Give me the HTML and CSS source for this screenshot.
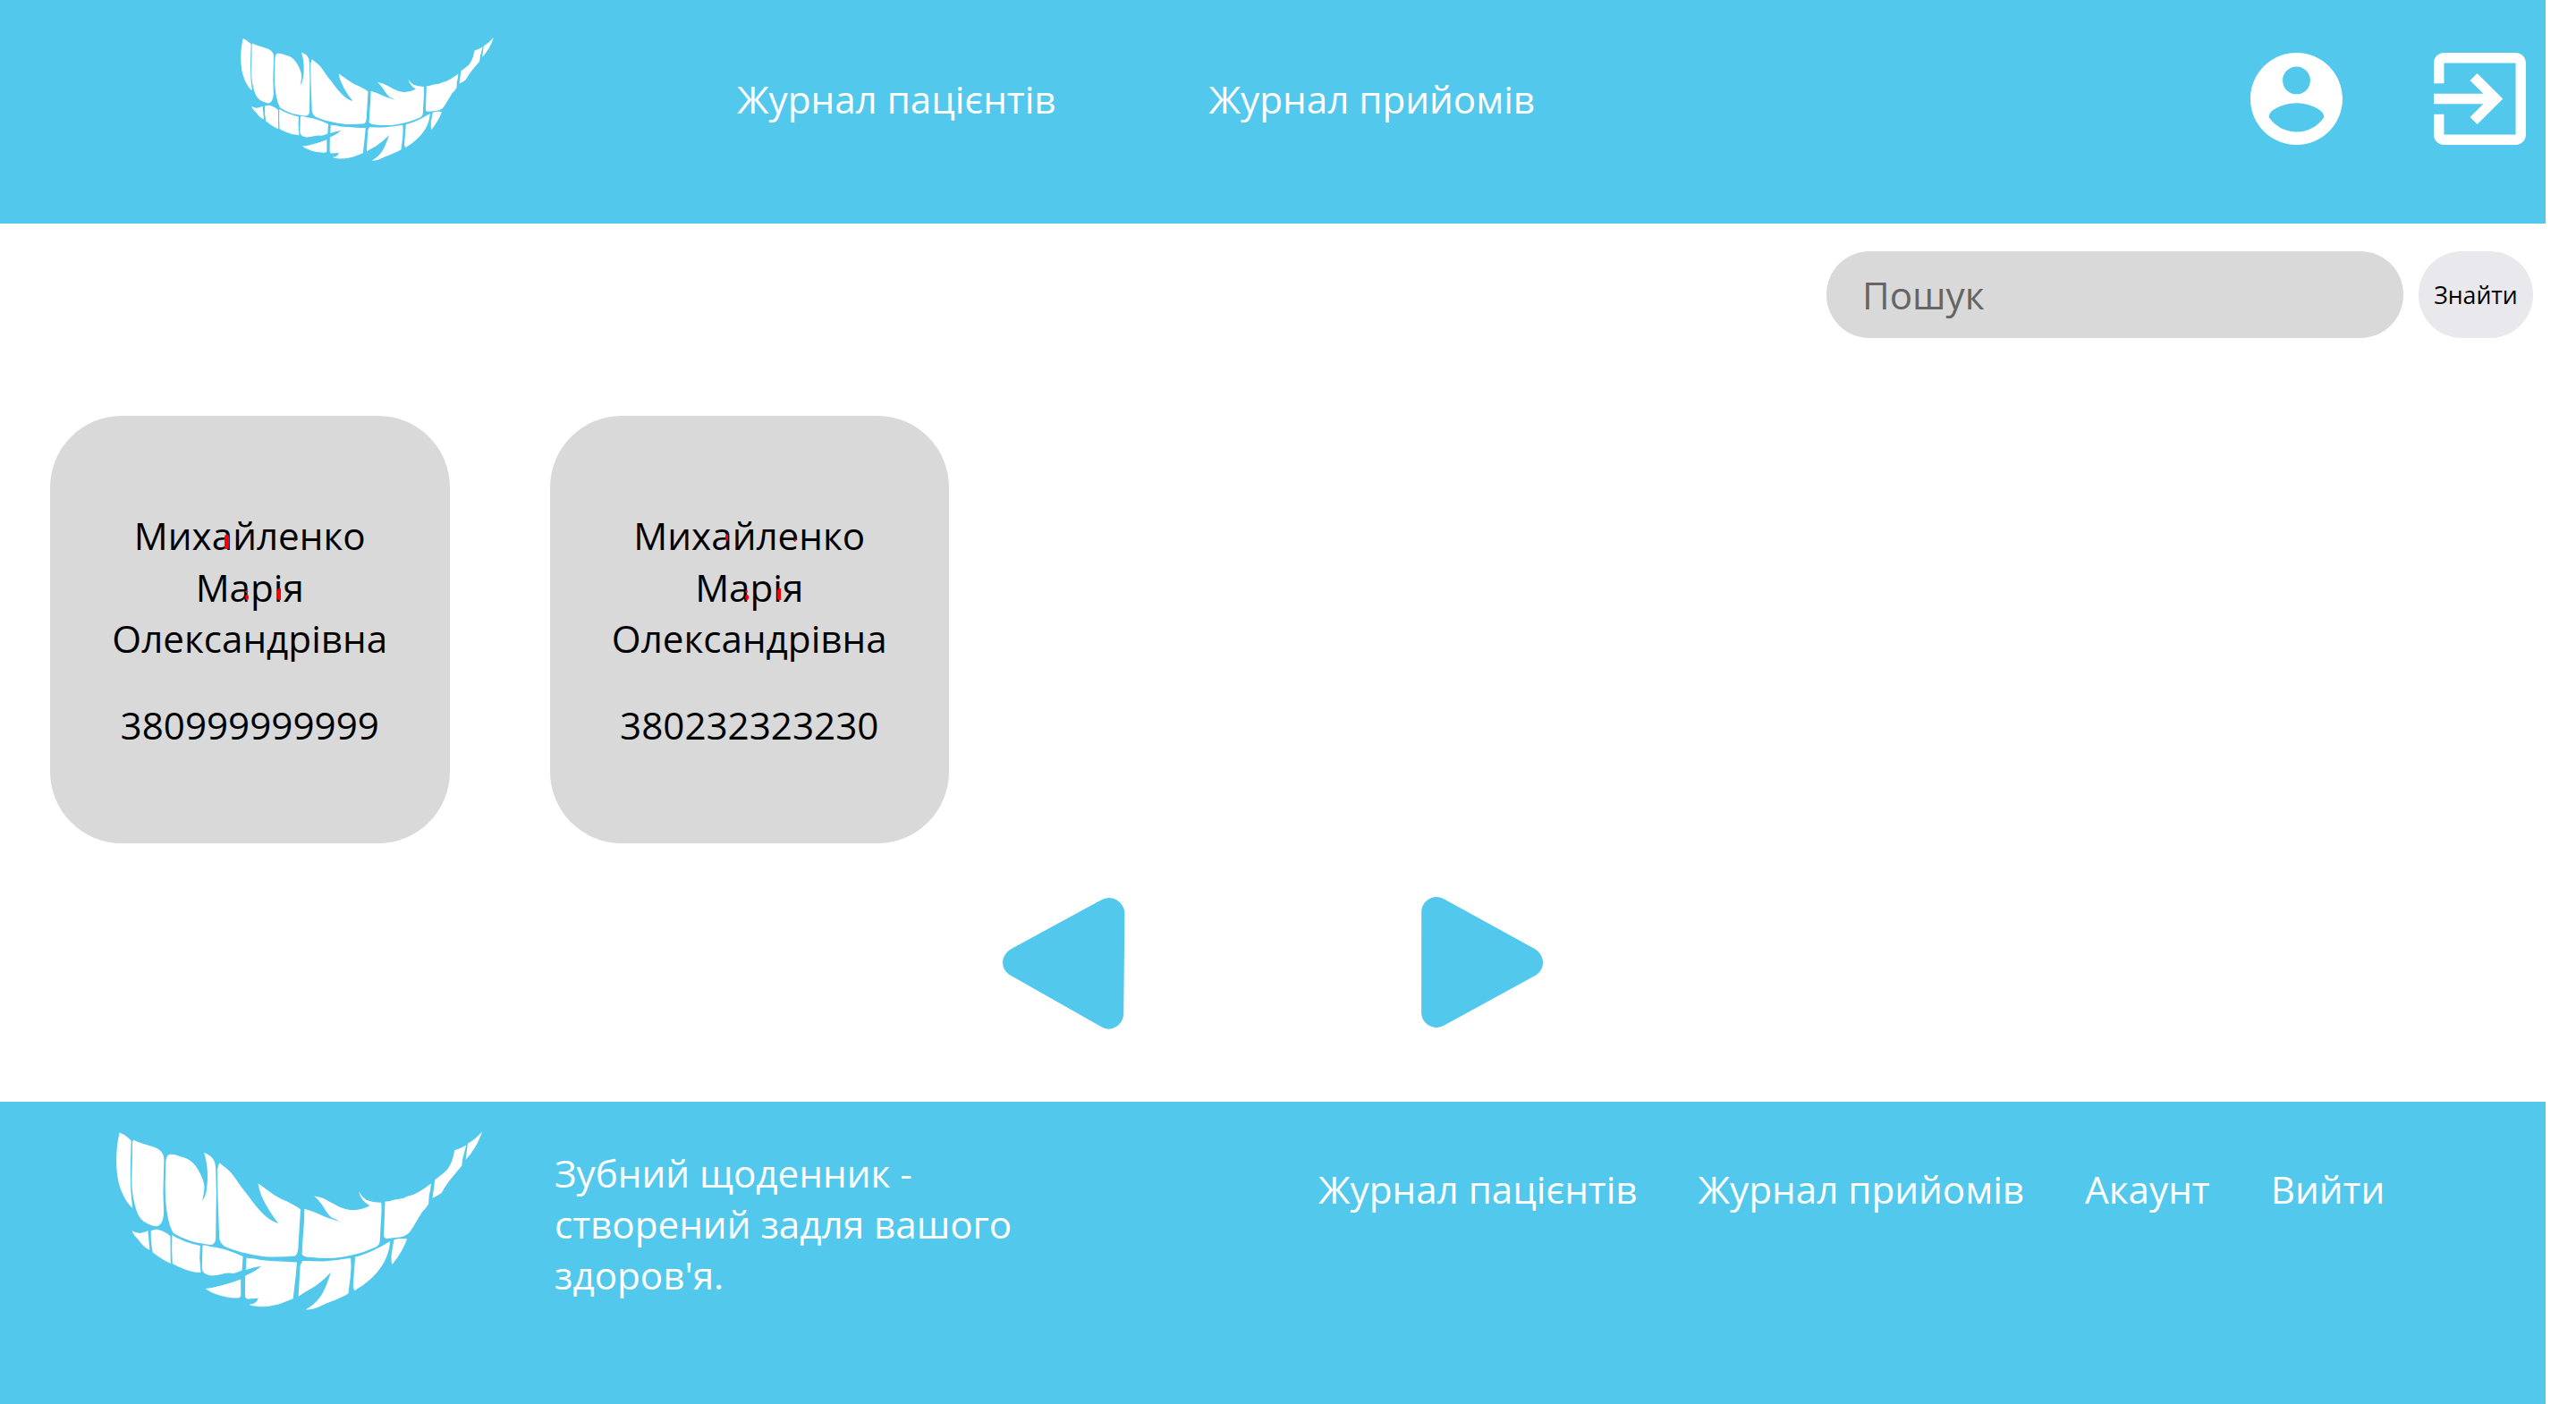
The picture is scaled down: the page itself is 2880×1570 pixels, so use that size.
FILE: index.html
```html
<!DOCTYPE html>
<html lang="uk">
<head>
<meta charset="utf-8">
<title>Журнал пацієнтів</title>
<link rel="stylesheet" href="styles.css">
</head>
<body>
<svg class="sprite" aria-hidden="true">
  <symbol id="logo" viewBox="31 47 1225 598">
    <path d="M42 51Q62 58 81 78C80 120 77 170 79 215C79 245 82 270 86 304C62 284 44 245 36 205C28 155 31 95 42 51Z"/>
    <path d="M88 75Q100 82 115 86L162 101Q190 112 191 140L188 250L190 318Q188 364 163 365Q148 362 138 357Q108 345 98 310C84 265 82 225 83 195Q85 135 85 85Z"/>
    <path d="M208 124Q225 122 243 130C275 138 292 150 307 179Q325 210 326 235Q325 255 319 279Q332 262 334 238C339 200 338 160 325 118Q345 125 355 139Q363 150 364 170L366 250L364 405Q363 425 347 427C325 424 300 420 282 415C258 406 240 400 221 386Q208 362 203 330C194 280 195 240 195 215L197 150Q198 128 208 124Z"/>
    <path d="M376 152L407 177C425 193 438 220 466 254C495 292 525 335 560 350L573 355Q571 350 564 342C530 295 510 255 506 221L544 249Q560 262 585 274C610 284 632 296 648 308L640 440Q637 462 628 464Q590 468 540 467C490 463 430 448 394 432Q378 420 376 405L371 265L369 175Z"/>
    <path d="M661 306Q690 314 712 325Q740 339 778 348Q768 340 753 336C735 322 727 300 713 284Q707 275 693 264Q720 267 739 279C770 295 792 310 825 311Q855 310 880 296Q850 280 843 248Q853 266 868 276Q890 285 918 285Q921 300 916 365L914 410Q914 425 903 433C865 450 830 462 785 468Q740 475 685 469Q655 467 653 458Q654 420 660 350Z"/>
    <path d="M931 282Q950 281 960 276L992 271Q1003 264 1025 259Q1050 249 1085 222Q1084 242 1078 265L1077 290Q1068 305 1056 316C1040 340 1028 365 1013 385Q1000 401 965 403L938 406Q927 405 927 397Z"/>
    <path d="M1098 209Q1120 193 1135 180C1152 160 1158 140 1164 110Q1185 104 1203 93L1191 138L1188 162L1154 203Q1138 222 1120 253Q1105 264 1090 270Z"/>
    <path d="M1208 88Q1235 73 1256 47Q1240 100 1201 142Z"/>
    <path d="M84 380Q95 388 110 388Q128 385 137 380L143 444C125 435 116 425 106 411Q85 390 84 380Z"/>
    <path d="M147 380Q165 371 183 380Q200 386 212 398L213 490Q190 479 175 468L153 452Q146 420 147 380Z"/>
    <path d="M218 394C245 412 280 423 312 430L310 470L314 520Q280 518 254 506Q235 500 219 490Q216 440 218 394Z"/>
    <path d="M320 429Q335 427 345 433C385 437 420 450 455 466L452 513L424 523Q405 519 385 525Q365 530 350 530Q335 528 325 521Q317 513 318 500Z"/>
    <path d="M467 471Q495 472 515 478C560 482 600 484 636 485L632 530L623 607Q600 616 575 626Q545 634 515 634Q480 633 477 627Q500 625 507 606L470 608Q463 606 462 595L463 530Q498 516 516 498Q490 502 465 511Z"/>
    <path d="M329 574Q380 568 448 542V598Q445 606 430 605Q370 603 329 574Z"/>
    <path d="M655 481Q690 482 725 482Q770 479 816 471Q819 500 815 535L808 590C780 608 740 619 715 632Q690 645 665 644C690 630 700 620 715 600C735 568 740 545 750 519Q718 553 685 573Q660 586 641 600L647 495Z"/>
    <path d="M831 467C870 460 915 435 948 415C945 450 935 475 920 498Q890 545 829 580Q822 572 825 550Z"/>
    <path d="M961 410Q980 403 1005 407Q990 450 955 493Q950 480 953 455Z"/>
  </symbol>
</svg>

<div class="page">
  <header class="header">
    <svg class="header-logo"><use href="#logo"/></svg>
    <nav class="header-nav">
      <a>Журнал пацієнтів</a>
      <a>Журнал прийомів</a>
    </nav>
    <div class="header-actions">
      <svg class="icon" viewBox="2 2 20 20"><path d="M12 2C6.48 2 2 6.48 2 12s4.48 10 10 10 10-4.48 10-10S17.52 2 12 2zm0 3c1.66 0 3 1.34 3 3s-1.34 3-3 3-3-1.34-3-3 1.34-3 3-3zm0 14.2c-2.5 0-4.71-1.28-6-3.22.03-1.99 4-3.08 6-3.08 1.99 0 5.97 1.09 6 3.08-1.29 1.94-3.5 3.22-6 3.22z"/></svg>
      <svg class="icon" viewBox="3 3 18 18"><path d="M10.09 15.59L11.5 17l5-5-5-5-1.41 1.41L12.67 11H3v2h9.67l-2.58 2.59zM19 3H5c-1.11 0-2 .9-2 2v4h2V5h14v14H5v-4H3v4c0 1.1.89 2 2 2h14c1.1 0 2-.9 2-2V5c0-1.1-.9-2-2-2z"/></svg>
    </div>
  </header>

  <main class="main">
    <form class="search">
      <input class="search-input" type="text" placeholder="Пошук">
      <button class="search-button" type="button">Знайти</button>
    </form>

    <div class="cards">
      <article class="card">
        <p class="card-name">Михайленко<br>Марія<br>Олександрівна</p>
        <p class="card-phone">380999999999</p>
        <svg class="marks" viewBox="0 0 447 478"><path d="M196 133h3l1 2v12l-1 2h-3l-1-2v-12zM255 193h3v13h-3l-1-2v-8zM219 200h2l1 2v2l-1 2h-2l-1-3zM218 196h3v1h-3zM219 195h1v3h-1zM272 139h3v1h-3zM273 138h1v3h-1z"/></svg>
      </article>
      <article class="card">
        <p class="card-name">Михайленко<br>Марія<br>Олександрівна</p>
        <p class="card-phone">380232323230</p>
        <svg class="marks" viewBox="0 0 447 478"><path d="M197 133h2v5l-1 2h-1l-1-2v-4zM255 193h3v13h-3l-1-2v-8zM219 200h2l1 2v2l-1 2h-2l-1-3zM218 196h3v1h-3zM219 195h1v3h-1zM272 139h3v1h-3zM273 138h1v3h-1z"/></svg>
      </article>
    </div>

    <div class="pager">
      <svg class="arrow" viewBox="1121 1003 137 148"><path d="M1230.5 1006.7Q1235 1004 1239.7 1004C1249 1004 1257.4 1012 1257.4 1021.7L1256.2 1134C1256 1143 1248 1150.7 1239.7 1150.7Q1235 1150.7 1230.5 1147.7L1130.3 1091C1118 1084 1118 1069 1130.3 1061.3Z"/></svg>
      <svg class="arrow" viewBox="1589 1003 137 148"><path d="M1589.2 1020C1589.2 1010 1597 1003 1606.4 1003Q1611 1003 1615.2 1005.7L1716.2 1061.3C1728 1069 1728 1084 1716.2 1091L1615.2 1146.3Q1611 1149 1606.8 1149C1597 1149 1589.1 1142 1589.1 1132.3Z"/></svg>
    </div>
  </main>

  <footer class="footer">
    <svg class="footer-logo"><use href="#logo"/></svg>
    <p class="footer-text">Зубний щоденник - створений задля вашого здоров'я.</p>
    <nav class="footer-nav">
      <a>Журнал пацієнтів</a>
      <a>Журнал прийомів</a>
      <a>Акаунт</a>
      <a>Вийти</a>
    </nav>
  </footer>
</div>
</body>
</html>
```
FILE: styles.css
```css
* { box-sizing: border-box; }
html, body { margin: 0; height: 100%; }
body {
  background: #fff;
  font-family: "Open Sans", "Noto Sans", sans-serif;
  font-size: 42.2px;
  line-height: 57px;
  color: #000;
  overflow: hidden;
}
p { margin: 0; }
svg { display: block; flex: none; }
.sprite { position: absolute; width: 0; height: 0; }

.page {
  display: flex;
  flex-direction: column;
  width: 2846px;
  height: 1570px;
}

.header {
  display: flex;
  align-items: center;
  flex: none;
  height: 250px;
  padding: 0 22px 29px 269px;
  background: #52c8ed;
  color: #fff;
}
.header-logo { width: 283px; height: 138px; fill: #fff; }
.header-nav { display: flex; gap: 171px; margin-left: 272px; white-space: nowrap; }
.header-actions { display: flex; gap: 102px; margin-left: auto; }
.icon { width: 103px; height: 103px; fill: #fff; }

.main { flex: 1; display: flex; flex-direction: column; padding-top: 31px; }
.search { display: flex; justify-content: flex-end; gap: 17px; padding-right: 14px; }
.search-input,
.search-button {
  height: 97px;
  margin: 0;
  border: 0;
  border-radius: 48px;
  font-family: inherit;
}
.search-input {
  width: 645px;
  padding: 0 40px;
  background: #d9d9d9;
  font-size: 42.2px;
}
.search-input::placeholder { color: #656565; }
.search-button {
  width: 128px;
  padding: 0;
  background: #e9e9ed;
  color: #000;
  font-size: 26.67px;
}

.cards { display: flex; gap: 112px; padding: 87px 56px 0; }
.card {
  position: relative;
  width: 446.5px;
  height: 478px;
  padding-top: 105px;
  border-radius: 80px;
  background: #d9d9d9;
  text-align: center;
}
.card-name { line-height: 57.5px; }
.card-phone { margin-top: 39px; }
.marks { position: absolute; inset: 0; width: 447px; height: 478px; fill: #f00; }

.pager { display: flex; justify-content: center; gap: 331px; margin-top: 60px; }
.arrow { width: 137px; height: 148px; fill: #52c8ed; }

.footer {
  display: flex;
  align-items: flex-start;
  flex: none;
  height: 338px;
  padding: 33px 0 0 130px;
  background: #52c8ed;
  color: #fff;
}
.footer-logo { width: 409px; height: 200px; fill: #fff; }
.footer-text { width: 540px; margin: 18px 0 0 81px; }
.footer-nav { display: flex; gap: 68px; margin: 36px 0 0 314px; white-space: nowrap; }
```
